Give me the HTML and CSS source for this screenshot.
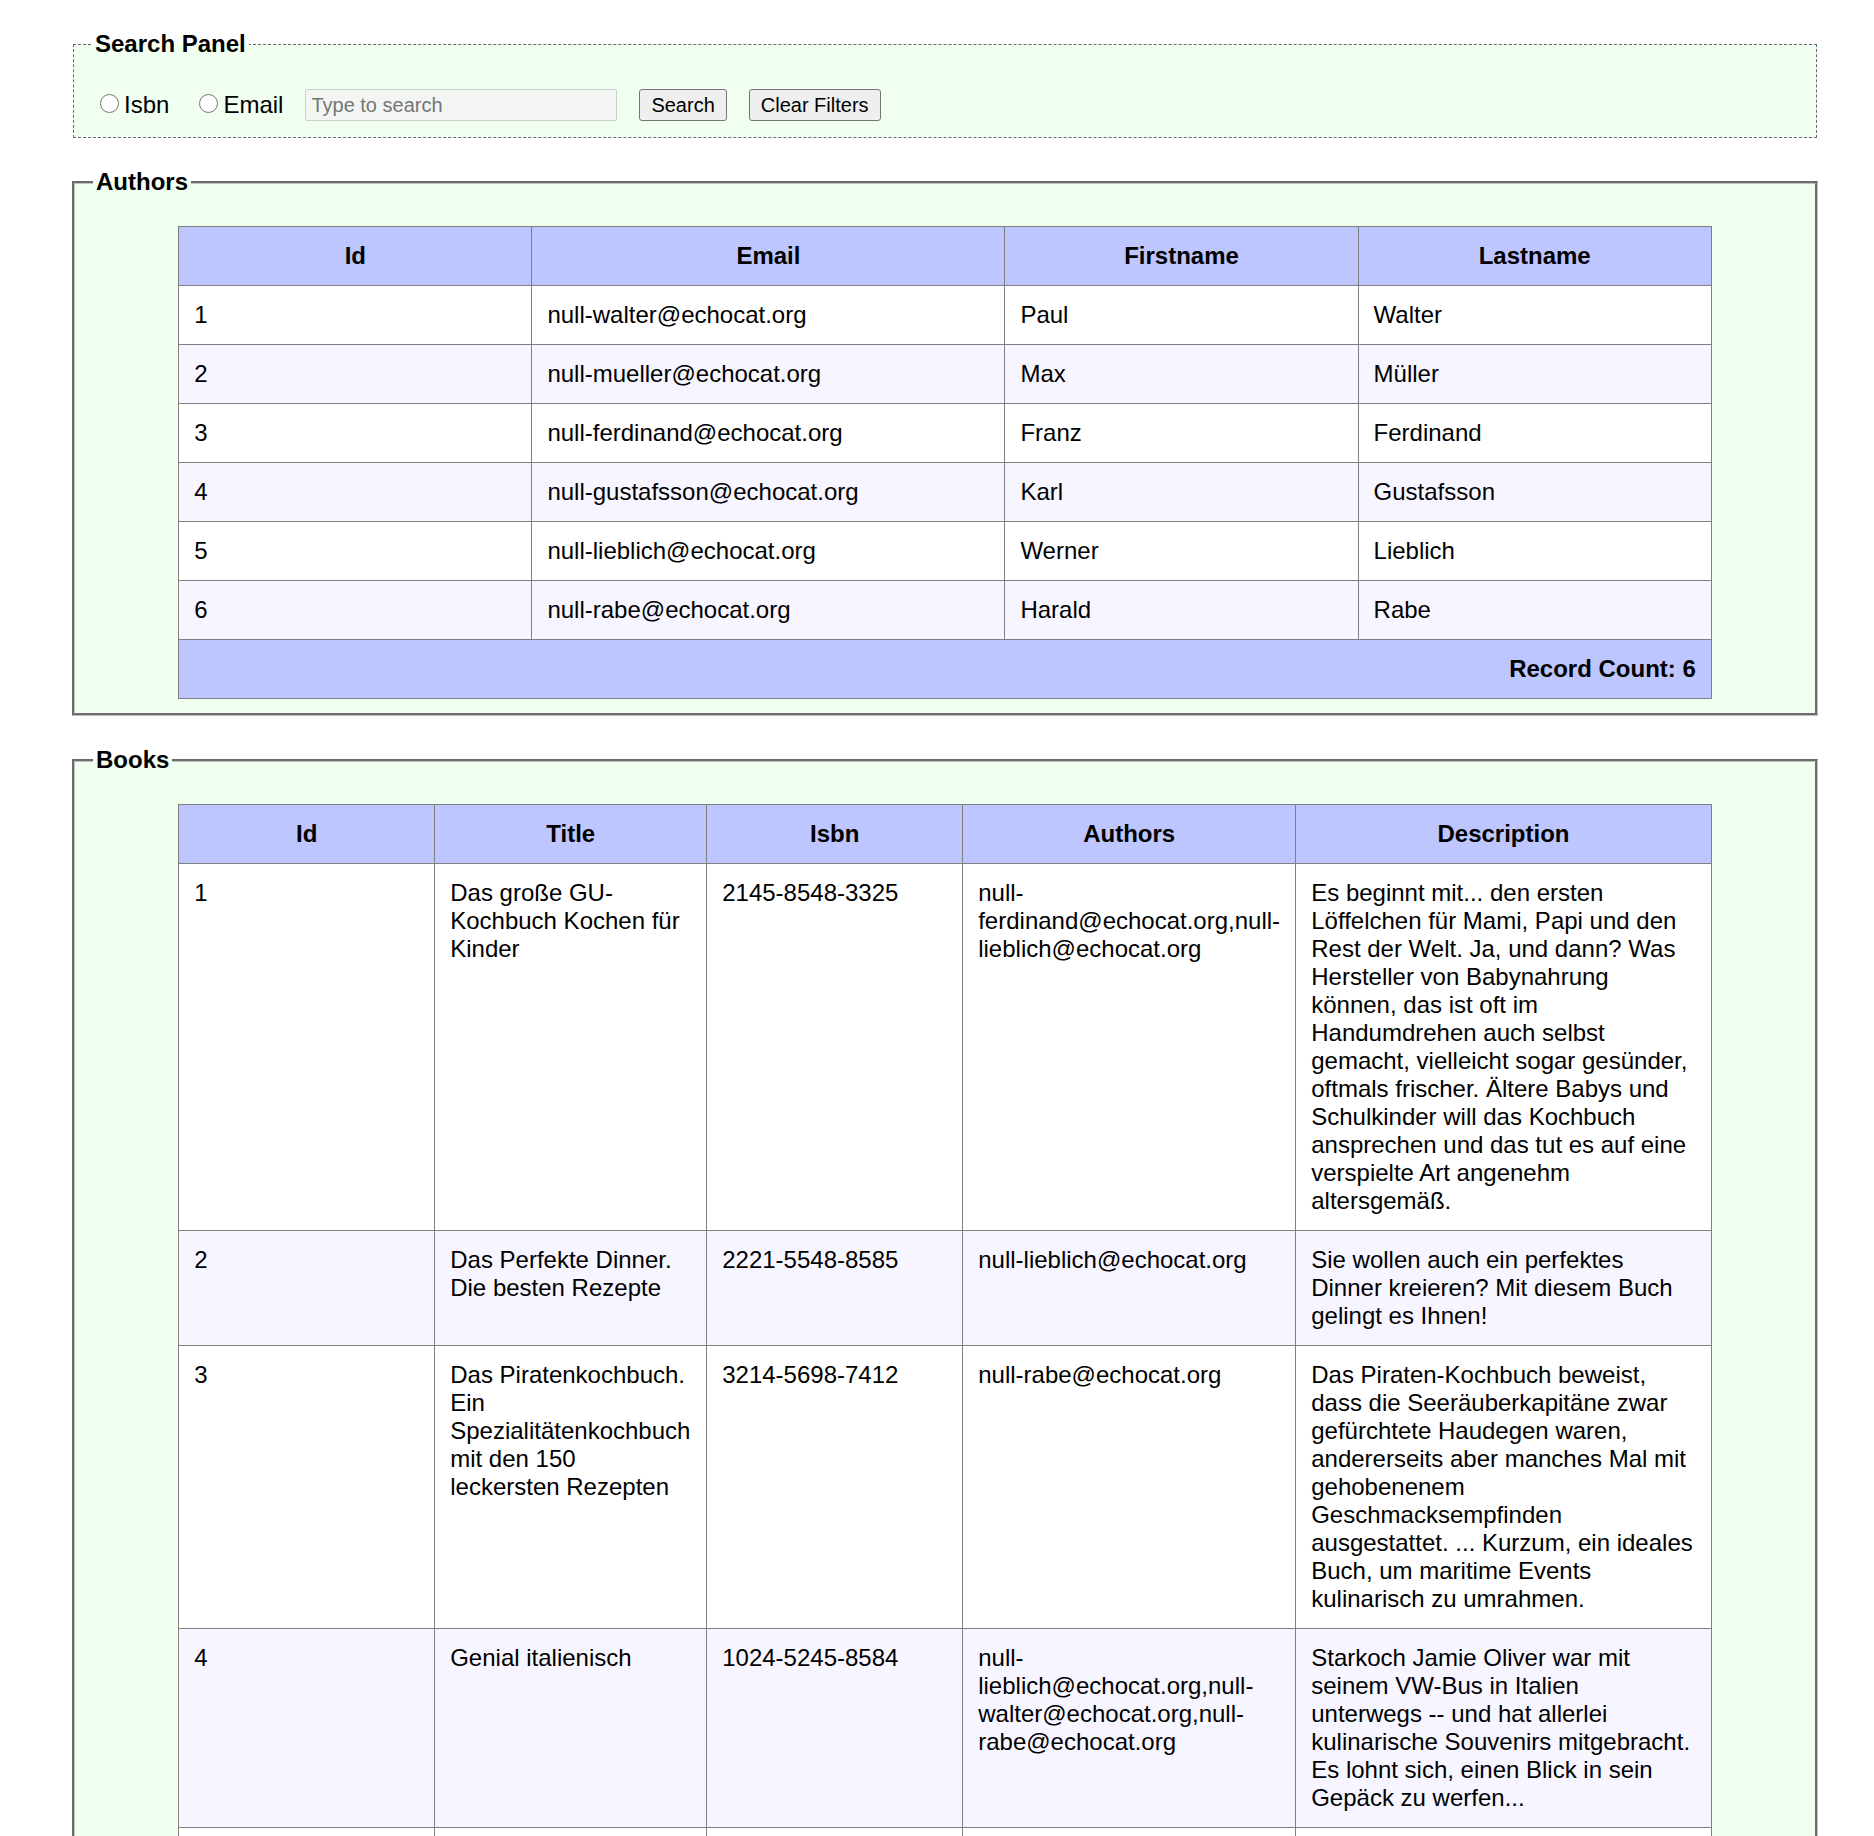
FILE: index.html
```
<!DOCTYPE html>
<html lang="en">
<head>
<meta charset="utf-8">
<title>Library</title>
<link rel="stylesheet" href="styles.css">
</head>
<body>
<form>
<fieldset class="search">
<legend>Search Panel</legend>
<div class="controls">
<label class="choice"><input type="radio" name="field" value="isbn">Isbn</label>
<label class="choice"><input type="radio" name="field" value="email">Email</label>
<input class="query" type="text" placeholder="Type to search" aria-label="Search text" disabled>
<button type="button">Search</button>
<button type="button">Clear Filters</button>
</div>
</fieldset>
</form>

<fieldset class="panel">
<legend>Authors</legend>
<table>
<colgroup><col><col class="a-email"><col><col></colgroup>
<thead><tr><th>Id</th><th>Email</th><th>Firstname</th><th>Lastname</th></tr></thead>
<tbody>
<tr><td>1</td><td>null-walter@echocat.org</td><td>Paul</td><td>Walter</td></tr>
<tr><td>2</td><td>null-mueller@echocat.org</td><td>Max</td><td>Müller</td></tr>
<tr><td>3</td><td>null-ferdinand@echocat.org</td><td>Franz</td><td>Ferdinand</td></tr>
<tr><td>4</td><td>null-gustafsson@echocat.org</td><td>Karl</td><td>Gustafsson</td></tr>
<tr><td>5</td><td>null-lieblich@echocat.org</td><td>Werner</td><td>Lieblich</td></tr>
<tr><td>6</td><td>null-rabe@echocat.org</td><td>Harald</td><td>Rabe</td></tr>
</tbody>
<tfoot><tr><td colspan="4">Record Count: 6</td></tr></tfoot>
</table>
</fieldset>

<fieldset class="panel">
<legend>Books</legend>
<table>
<colgroup><col class="b-id"><col class="b-title"><col class="b-isbn"><col class="b-authors"><col></colgroup>
<thead><tr><th>Id</th><th>Title</th><th>Isbn</th><th>Authors</th><th>Description</th></tr></thead>
<tbody>
<tr><td>1</td><td>Das große GU-Kochbuch Kochen für Kinder</td><td>2145-8548-3325</td><td>null-ferdinand@echocat.org,null-lieblich@echocat.org</td><td>Es beginnt mit... den ersten Löffelchen für Mami, Papi und den Rest der Welt. Ja, und dann? Was Hersteller von Babynahrung können, das ist oft im Handumdrehen auch selbst gemacht, vielleicht sogar gesünder, oftmals frischer. Ältere Babys und Schulkinder will das Kochbuch ansprechen und das tut es auf eine verspielte Art angenehm altersgemäß.</td></tr>
<tr><td>2</td><td>Das Perfekte Dinner. Die besten Rezepte</td><td>2221-5548-8585</td><td>null-lieblich@echocat.org</td><td>Sie wollen auch ein perfektes Dinner kreieren? Mit diesem Buch gelingt es Ihnen!</td></tr>
<tr><td>3</td><td>Das Piratenkochbuch. Ein Spezialitätenkochbuch mit den 150 leckersten Rezepten</td><td>3214-5698-7412</td><td>null-rabe@echocat.org</td><td>Das Piraten-Kochbuch beweist, dass die Seeräuberkapitäne zwar gefürchtete Haudegen waren, andererseits aber manches Mal mit gehobenenem Geschmacksempfinden ausgestattet. ... Kurzum, ein ideales Buch, um maritime Events kulinarisch zu umrahmen.</td></tr>
<tr><td>4</td><td>Genial italienisch</td><td>1024-5245-8584</td><td>null-lieblich@echocat.org,null-walter@echocat.org,null-rabe@echocat.org</td><td>Starkoch Jamie Oliver war mit seinem VW-Bus in Italien unterwegs -- und hat allerlei kulinarische Souvenirs mitgebracht. Es lohnt sich, einen Blick in sein Gepäck zu werfen...</td></tr>
<tr><td></td><td></td><td></td><td></td><td></td></tr>
</tbody>
</table>
</fieldset>
</body>
</html>
```
FILE: styles.css
```
* {
  box-sizing: border-box;
}

html {
  height: 100%;
  overflow: hidden;
}

body {
  margin: 0;
  padding: 30px 56px 0 72px;
  height: 100%;
  overflow: hidden;
  background: #fff;
  color: #000;
  font: 24px/28px "Liberation Sans", Arial, sans-serif;
}

fieldset {
  min-width: 0;
  margin: 0;
  background: #f0fff0;
}

legend {
  padding: 0 3px;
  font-weight: bold;
}

.search {
  margin: 0 1px;
  padding: 31px 18px 16px;
  border: 1px dashed #696969;
}

.controls {
  display: flex;
  align-items: center;
  gap: 22px;
}

.choice {
  display: flex;
  align-items: center;
}

.choice input {
  width: 19px;
  height: 19px;
  margin: 0 5px 4px 8px;
}

.query,
button {
  height: 32px;
  border: 1px solid #767676;
  border-radius: 3px;
  font: 20px/24px "Liberation Sans", Arial, sans-serif;
}

.query {
  width: 312px;
  padding: 1px 5px;
  border-color: #c6d2c6;
  border-radius: 2px;
  background: #f3f5f2;
}

.query::placeholder {
  color: #757575;
}

button {
  padding: 1px 11px;
  background: #efefef;
  color: #000;
}

.panel {
  margin-top: 30px;
  padding: 30px 18px 14px;
  border: 3px groove #c0c0c0;
}

table {
  width: 90%;
  margin: 0 auto;
  border-collapse: collapse;
  table-layout: fixed;
  background: #fff;
}

th,
td {
  height: 59px;
  padding: 15px;
  border: 1px solid #808080;
  text-align: left;
  vertical-align: top;
}

th {
  background: #bdc6ff;
  text-align: center;
}

tbody tr:nth-child(even) {
  background: #f7f5ff;
}

tfoot td {
  background: #bdc6ff;
  font-weight: bold;
  text-align: right;
}

.a-email {
  width: 473px;
}

.b-id,
.b-isbn {
  width: 256px;
}

.b-title {
  width: 272px;
}

.b-authors {
  width: 333px;
}
```
